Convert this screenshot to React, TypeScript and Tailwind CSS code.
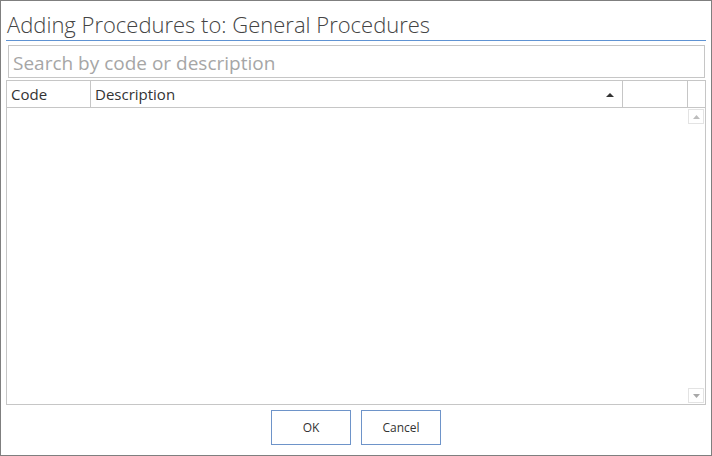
export default function App() {
  return (
    <main
      className="w-[712px] h-[456px] bg-white border border-[#7f7f7f] flex flex-col px-[5px] overflow-hidden"
      style={{ fontFamily: '"Open Sans", "Noto Sans", sans-serif' }}
    >
      <div className="h-[40px] border-b border-[#5f93d3] flex items-end">
        <h1 className="text-[22px] leading-[30px] font-light text-[#444] pl-[1px] pb-[1px]">
          Adding Procedures to: General Procedures
        </h1>
      </div>

      <div className="mt-[4px] mx-[2px] mr-[1px] h-[33px] border border-[#c6c6c6] flex items-center px-[4px]">
        <input
          placeholder="Search by code or description"
          className="w-full outline-none text-[19px] text-[#333] placeholder:text-[#a6a6a6] bg-transparent pt-[3px]"
        />
      </div>

      <div className="mt-[2px] h-[325px] border border-[#c6c6c6] flex flex-col">
        <div className="h-[27px] border-b border-[#c6c6c6] flex text-[15px] text-[#333]">
          <div className="w-[84px] border-r border-[#c6c6c6] flex items-center pl-[4px] pt-[1px]">Code</div>
          <div className="w-[532px] border-r border-[#c6c6c6] flex items-center pl-[4px] pt-[1px] relative">
            Description
            <svg className="absolute right-[8px] top-[11px]" width="8" height="5" viewBox="0 0 8 5">
              <path d="M0 5 L4 1 L8 5 Z" fill="#333" />
            </svg>
          </div>
          <div className="w-[65px] border-r border-[#c6c6c6]" />
          <div className="flex-1" />
        </div>
        <div className="flex-1 flex justify-end">
          <div className="w-[16px] mr-[1px] flex flex-col justify-between py-[1px]">
            <div className="h-[15px] border border-[#e3e3e3] flex items-center justify-center">
              <svg width="7" height="4" viewBox="0 0 7 4">
                <path d="M0 4 L3.5 0 L7 4 Z" fill="#bdbdbd" />
              </svg>
            </div>
            <div className="h-[15px] border border-[#e3e3e3] flex items-center justify-center">
              <svg width="7" height="4" viewBox="0 0 7 4">
                <path d="M0 0 L3.5 4 L7 0 Z" fill="#a8a8a8" />
              </svg>
            </div>
          </div>
        </div>
      </div>

      <div className="flex justify-center gap-[10px] mt-[5px]">
        <button className="w-[80px] h-[35px] border border-[#6e94c9] text-[12px] text-[#333] bg-white">OK</button>
        <button className="w-[80px] h-[35px] border border-[#6e94c9] text-[12px] text-[#333] bg-white">Cancel</button>
      </div>
    </main>
  );
}
